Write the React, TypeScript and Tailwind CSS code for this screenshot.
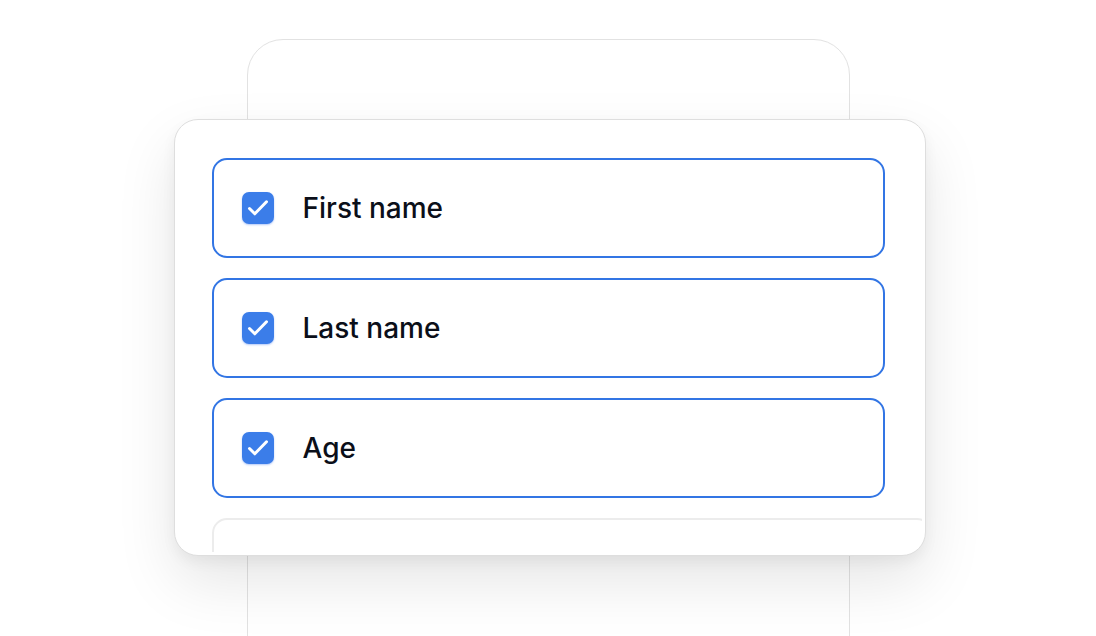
const fields = [
  { label: "First name", checked: true },
  { label: "Last name", checked: true },
  { label: "Age", checked: true },
  { label: "", checked: false },
];

function Checkbox({ checked }: { checked: boolean }) {
  if (!checked) {
    return (
      <span className="h-8 w-8 shrink-0 rounded-[7px] border-2 border-[#e6e6e6] bg-white" />
    );
  }
  return (
    <span className="block h-8 w-8 shrink-0 rounded-[7px] bg-[#3b7de9] shadow-[0_1px_2px_rgba(37,99,235,0.35)]">
      <svg className="h-8 w-8" viewBox="0 0 32 32" fill="none">
        <path
          d="M7.5 16.5 L12.8 21.8 L24.5 9.8"
          stroke="white"
          strokeWidth="3"
          strokeLinecap="round"
          strokeLinejoin="round"
        />
      </svg>
    </span>
  );
}

export default function App() {
  return (
    <div className="flex h-[636px] justify-center overflow-hidden bg-white font-['Inter',sans-serif]">
      <div className="mt-[39px] h-[700px] w-[603px] shrink-0 rounded-t-[36px] border border-[#e2e2e2] bg-white">
        {/* front card */}
        <div className="ml-[-74px] mt-[79px] w-[752px] rounded-[24px] border border-[#dedede] bg-white p-[3px] shadow-[0_6px_14px_rgba(0,0,0,0.05),0_26px_60px_rgba(0,0,0,0.1)]">
          <div className="flex h-[429px] flex-col gap-5 overflow-hidden rounded-[21px] pl-[34px] pt-[35px]">
            {fields.map((field, i) => (
              <div
                key={i}
                className={
                  field.checked
                    ? "flex h-[100px] w-[673px] shrink-0 items-center gap-[29px] rounded-[15px] border-2 border-[#3275e4] pl-[28px]"
                    : "flex h-[100px] w-[720px] shrink-0 items-center gap-[29px] rounded-[15px] border-2 border-[#ececec] pl-[31px]"
                }
              >
                <Checkbox checked={field.checked} />
                <span className="text-[28px] font-[450] text-[#0b0f19]">
                  {field.label}
                </span>
              </div>
            ))}
          </div>
        </div>
      </div>
    </div>
  );
}
